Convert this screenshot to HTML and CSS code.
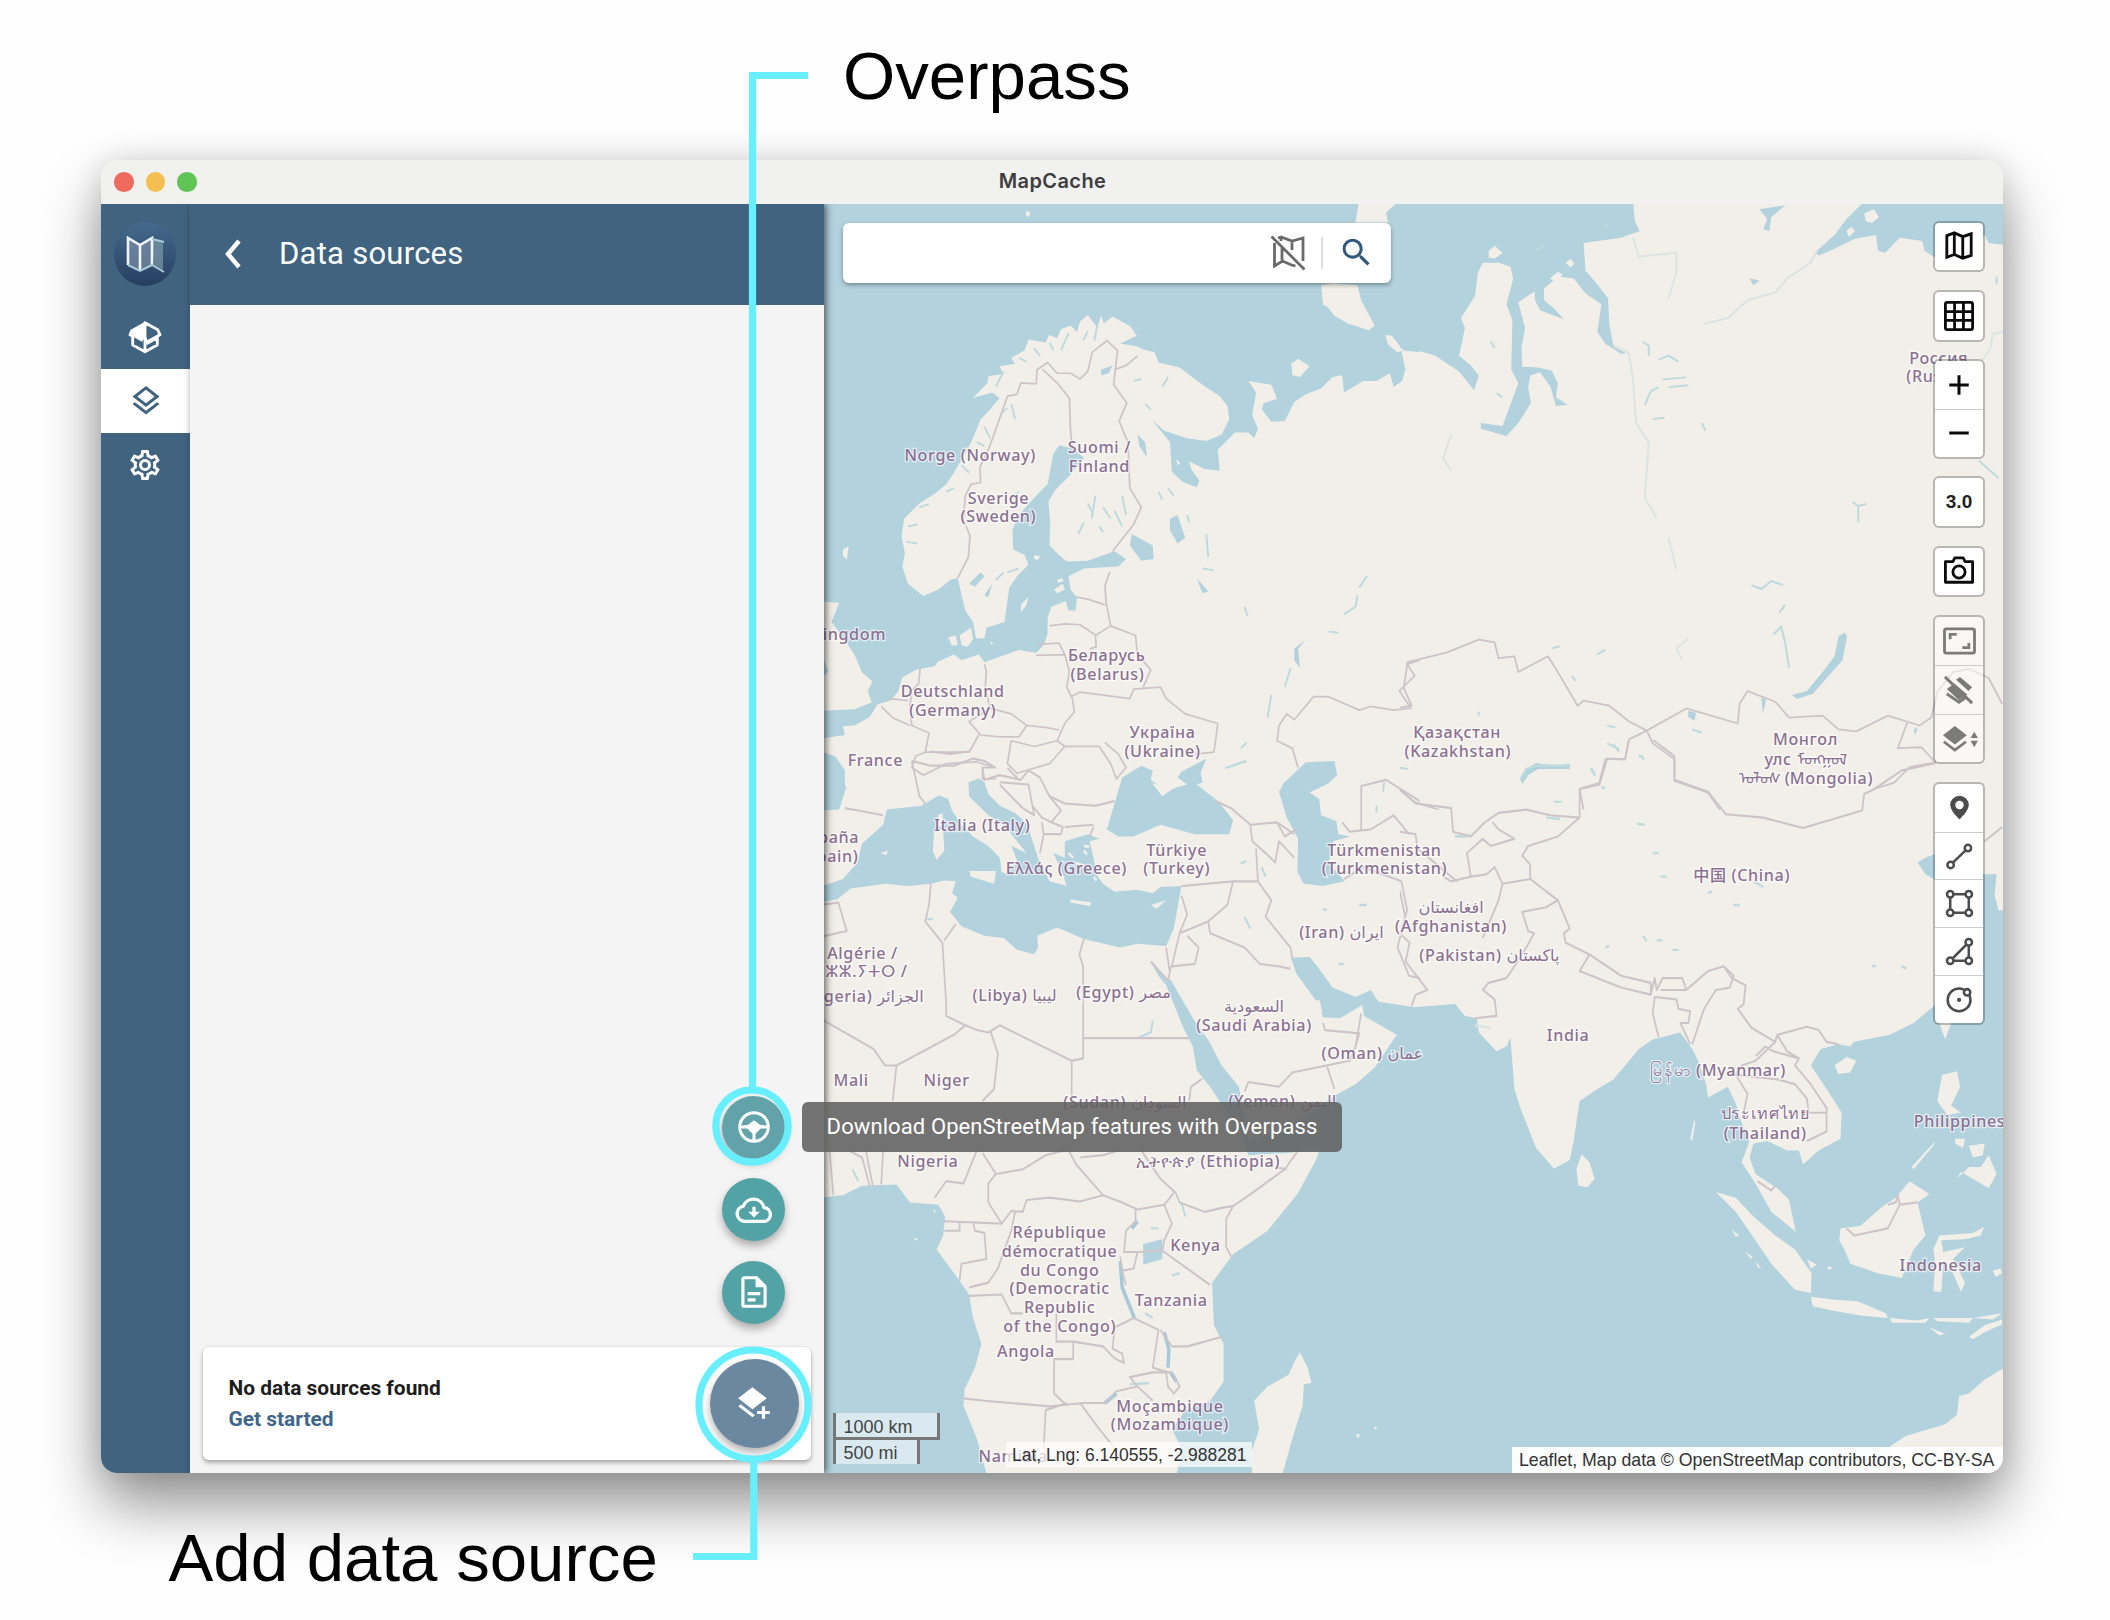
FILE: index.html
```html
<!DOCTYPE html>
<html lang="en">
<head>
<meta charset="utf-8">
<title>MapCache</title>
<link rel="stylesheet" href="styles.css">
</head>
<body>
<main class="figure">
  <p class="note note-top">Overpass</p>

  <section class="window">
    <header class="titlebar">
      <div class="lights"><i class="light red"></i><i class="light amber"></i><i class="light green"></i></div>
      <h1>MapCache</h1>
    </header>

    <div class="content">
      <nav class="rail">
        <a class="logo">
          <svg viewBox="0 0 62 64" width="62" height="64">
            <defs><linearGradient id="lg" x1="0" y1="0" x2="0" y2="1"><stop offset="0" stop-color="#456a8e"/><stop offset="1" stop-color="#263e60"/></linearGradient></defs>
            <ellipse cx="31" cy="32" rx="31" ry="32" fill="url(#lg)"/>
            <path d="M13 16l13 7v26l-13-6zM26 23l12-7v27l-12 6z" fill="#7f93ab" opacity=".65"/>
            <path d="M38 16l11 5v27l-9-5z" fill="#7c9aa9" opacity=".7"/>
            <path d="M14 43V16l12 7 12-7v27M26 23v26" fill="none" stroke="#f1f5f9" stroke-width="2.600"/>
            <path d="M38 17l12 3M14 43l12 6 12-6 12 7" fill="none" stroke="#a9cbd6" stroke-width="2"/>
          </svg>
        </a>
        <a class="item">
          <svg class="ic" viewBox="0 0 24 24"><path fill="none" stroke="currentColor" stroke-width="1.900" stroke-linejoin="round" d="M3.800 11v6.400l8.200 4.400 8.200-4.400V11M12 12v9.500M12 2.500l8.500 4.700L22 10.500 13 15.500 12 12zM3.500 7.200L2 10.500l2 1.100M19.500 12.800L13 16.500"/><path fill="currentColor" d="M2.800 7L12 1.900V12l-2 3.200L4 11.800z"/></svg>
        </a>
        <a class="item active">
          <svg class="ic" viewBox="0 0 24 24"><path fill="currentColor" d="M12,18.54L19.37,12.8L21,14.07L12,21.07L3,14.07L4.62,12.81L12,18.54M12,16L3,9L12,2L21,9L12,16M12,4.53L6.26,9L12,13.47L17.74,9L12,4.53Z"/></svg>
        </a>
        <a class="item">
          <svg class="ic" viewBox="0 0 24 24"><path fill="currentColor" d="M12,8A4,4 0 0,1 16,12A4,4 0 0,1 12,16A4,4 0 0,1 8,12A4,4 0 0,1 12,8M12,10A2,2 0 0,0 10,12A2,2 0 0,0 12,14A2,2 0 0,0 14,12A2,2 0 0,0 12,10M10,22C9.75,22 9.54,21.82 9.5,21.58L9.13,18.93C8.5,18.68 7.96,18.34 7.44,17.94L4.95,18.95C4.73,19.03 4.46,18.95 4.34,18.73L2.34,15.27C2.21,15.05 2.27,14.78 2.46,14.63L4.57,12.97L4.5,12L4.57,11L2.46,9.37C2.27,9.22 2.21,8.95 2.34,8.73L4.34,5.27C4.46,5.05 4.73,4.96 4.95,5.05L7.44,6.05C7.96,5.66 8.5,5.32 9.13,5.07L9.5,2.42C9.54,2.18 9.75,2 10,2H14C14.25,2 14.46,2.18 14.5,2.42L14.87,5.07C15.5,5.32 16.04,5.66 16.56,6.05L19.05,5.05C19.27,4.96 19.54,5.05 19.66,5.27L21.66,8.73C21.79,8.95 21.73,9.22 21.54,9.37L19.43,11L19.5,12L19.43,13L21.54,14.63C21.73,14.78 21.79,15.05 21.66,15.27L19.66,18.73C19.54,18.95 19.27,19.04 19.05,18.95L16.56,17.95C16.04,18.34 15.5,18.68 14.87,18.93L14.5,21.58C14.46,21.82 14.25,22 14,22H10M11.25,4L10.88,6.61C9.68,6.86 8.62,7.5 7.85,8.39L5.44,7.35L4.69,8.65L6.8,10.2C6.4,11.37 6.4,12.64 6.8,13.8L4.68,15.36L5.43,16.66L7.86,15.62C8.63,16.5 9.68,17.14 10.87,17.38L11.24,20H12.76L13.13,17.39C14.32,17.14 15.37,16.5 16.14,15.62L18.57,16.66L19.32,15.36L17.2,13.81C17.6,12.64 17.6,11.37 17.2,10.2L19.31,8.65L18.56,7.35L16.15,8.39C15.38,7.5 14.32,6.86 13.12,6.62L12.75,4H11.25Z"/></svg>
        </a>
      </nav>

      <aside class="panel">
        <div class="panel-head">
          <svg class="back" viewBox="0 0 18 30" width="18" height="30"><path d="M15 2L4 15l11 13" fill="none" stroke="#fff" stroke-width="4.400"/></svg>
          <h2>Data sources</h2>
        </div>
        <div class="panel-body">
          <div class="dial">
            <button class="fab lit"><svg width="36" height="36" viewBox="0 0 24 24"><circle cx="12" cy="12" r="9.500" fill="none" stroke="#fff" stroke-width="2"/><path fill="#fff" d="M3 11.200L8 10.500 12 7.500l4 3 5 .7v1.800h-4.500L13 16.500V21h-2v-4.500L7.500 13H3z"/></svg></button>
            <button class="fab"><svg width="40" height="40" viewBox="0 0 24 24"><path fill="none" stroke="#fff" stroke-width="2" stroke-linejoin="round" d="M6.200 18.800a4.600 4.600 0 0 1-.6-9.100A6.500 6.500 0 0 1 18 10.500a4.200 4.200 0 0 1 .5 8.300z"/><path fill="#fff" d="M11 10h2V13h2.500L12 16.500 8.500 13H11z"/></svg></button>
            <button class="fab"><svg width="38" height="38" viewBox="0 0 24 24"><path fill="#fff" d="M6,2A2,2 0 0,0 4,4V20A2,2 0 0,0 6,22H18A2,2 0 0,0 20,20V8L14,2H6M6,4H13V9H18V20H6V4M8,12V14H16V12H8M8,16V18H13V16H8Z"/></svg></button>
          </div>
          <div class="card">
            <div class="card-text">
              <p class="empty">No data sources found</p>
              <a class="start">Get started</a>
            </div>
            <button class="fab add"><svg width="38" height="38" viewBox="0 0 24 24"><path fill="#fff" d="M17,14H19V17H22V19H19V22H17V19H14V17H17V14M11,16L2,9L11,2L20,9L11,16M3.600,12.800L12.600,19.800L11,21L2,14.100Z"/></svg></button>
          </div>
        </div>
      </aside>

      <div class="map">
        <svg class="tiles" viewBox="824 204.500 1179.500 1268" preserveAspectRatio="none">
          <!-- north-west: Scandinavia and Europe -->
          <svg x="820" y="190" width="600" height="600" viewBox="0 0 1568 1568">
            <path class="sea" d="M0 30H1570V425L1520 420 1530 470 1522 500 1500 515 1490 480 1455 500 1420 500 1370 530 1365 485 1340 490 1310 520 1270 535 1240 555 1215 605 1180 607 1155 575 1160 558 1195 547 1180 510 1120 500 1140 530 1130 590 1145 625 1135 650 1120 635 1085 635 1040 680 1045 735 1005 730 965 710 970 730 992 760 985 778 950 765 920 738 915 660 870 605 862 597 900 630 960 650 1010 657 1050 640 1070 600 1065 565 1045 540 1000 510 940 465 885 452 875 425 845 418 830 410 785 402 828 382 812 358 765 332 742 350 735 330 725 360 700 328 680 345 672 372 655 355 630 365 620 388 598 380 590 400 545 392 535 420 500 440 510 455 470 462 478 482 440 488 438 505 400 545 450 530 470 545 440 580 420 600 400 650 385 680 350 740 330 770 300 795 260 820 220 860 213 905 222 950 215 985 230 1030 270 1062 310 1045 340 1020 360 1015 370 1060 380 1100 400 1130 408 1172 430 1172 435 1145 482 1130 495 1040 515 1010 545 980 535 955 505 940 503 890 520 850 565 800 595 770 610 690 625 668 655 675 690 700 655 745 615 785 597 815 602 870 600 930 625 955 645 972 700 970 770 945 800 965 780 985 690 990 650 1010 655 1045 672 1065 668 1100 650 1100 642 1075 605 1090 595 1120 595 1160 585 1190 565 1210 520 1203 430 1235 415 1215 370 1230 350 1215 305 1235 290 1180 288 1130 330 1085 345 1095 350 1140 335 1150 330 1190 322 1215 300 1245 250 1255 215 1275 205 1310 185 1335 150 1345 130 1378 90 1400 60 1402 65 1425 30 1430 0 1435V1362L90 1358 135 1340 125 1310 137 1285 110 1262 90 1215 60 1170 30 1130 50 1080 0 1075Z"/>
            <path class="sea" d="M0 1460L25 1490 50 1510 70 1568H0ZM815 900L870 930 872 965 840 970 810 930ZM915 860L935 850 955 910 935 925 915 890ZM390 1030L420 1000 430 1010 405 1038ZM430 1060L450 1030 440 1065ZM985 1015L1015 1050 1000 1055ZM0 1200L22 1260 0 1280ZM1240 1200L1270 1175 1250 1200 1255 1250 1240 1230ZM830 640l20 20 5 40-20-30zM735 470l30-10-10 20-20 5z"/>
            <path class="lake" d="M700 370l-12 25M725 355l-8 40M650 375l-20 45M600 400l10 20M560 415l15 20M520 440l20 10M480 475l-20 40M500 560l10 40M470 590l20-20M430 620l15 30M410 660l20 10M370 720l20 20M330 790l20-10M260 830l25-8M230 880l25-5M225 920l30 5M700 820l15 30M720 800l-10 60M740 830l20 30M770 840l20 40M690 870l-15 30M730 880l10 15M790 800l10 50M850 560l15 15M820 500l20-5M910 490l-15 25M520 790l-20 20M885 790l10 20M910 780l15 20M960 850l5 20M1010 900l5 60M1000 990l30 5M460 1020l20-20M490 1000l30-10M1110 1090l8 25M1370 1110l30-20 5-30M1410 1040l20-30M1330 1155l25 3M1180 1320l-10 60M1230 1250l-15 50M1100 1460l15-15"/>
            <path class="land" d="M1408 38H1505L1480 60 1485 86H1400ZM1310 250L1340 245 1405 250 1415 290 1450 355 1435 368 1380 350 1345 330 1330 310 1315 300ZM1478 380L1495 382 1525 420 1510 425 1485 405ZM1232 455L1250 442 1280 462 1255 490 1235 485ZM365 1165L395 1145 400 1175 385 1195 370 1190ZM335 1170L355 1165 360 1190 345 1192ZM525 1085L545 1065 540 1085 525 1105ZM612 1045L635 1030 640 1045 620 1055ZM620 1020l12-5 5 8-14 5zM560 955l15 3-5 10-10-3zM60 940l15-8-5 35-10-10zM540 55l10 5-4 12-8-5zM445 1180l8 4-5 6zM930 705l12 8-6 8z"/>
            <path class="border" d="M360 1015L388 960 392 905 375 860 380 800 395 770 420 765 418 725 440 680 455 640 490 540 515 535 525 505 565 508 568 470 595 452 620 480 655 480 680 495 700 475 712 425 750 395 778 420 772 470 768 510 802 558 782 605 805 660 810 780 840 830 820 875 765 945M582 470L620 505 652 545 655 630 660 680M772 470L800 460 830 435M758 998L745 1035 748 1080 760 1140 720 1165 722 1195 705 1200M670 1065L700 1070 745 1085M600 1140L640 1135 680 1137 722 1165M570 1188L625 1185 640 1215 565 1217M760 1140L825 1165 830 1215 865 1255 845 1300M640 1215L652 1260 645 1300 660 1330 665 1365 640 1395 620 1440 640 1455M655 1325L680 1313 810 1330 820 1305 890 1300 905 1330 955 1370 1040 1395 1030 1470 980 1475M430 1240L435 1260 432 1300 445 1355 500 1370 540 1400 590 1405 625 1412M445 1355L390 1390 420 1425 470 1430 520 1430 540 1400M262 1250L258 1290 240 1310 235 1350 240 1400 285 1420 275 1470 250 1480 240 1510 270 1530 330 1500 410 1495 455 1510M275 1470H390L415 1425M160 1350L190 1380 235 1400M180 1330L230 1335M500 1440L490 1500 515 1525 600 1500 640 1455 730 1455 760 1500 775 1540 800 1510 780 1475 745 1445M455 1510L425 1510 425 1540 460 1540M500 1440L560 1455 620 1440M1250 1510L1235 1460 1195 1440 1200 1400 1220 1370 1240 1385 1290 1325 1330 1325 1410 1360 1440 1350 1500 1360 1545 1355 1515 1310 1555 1270 1535 1240 1568 1230"/>
          </svg>
          <!-- north-east: Siberia and Central Asia -->
          <svg x="1400" y="190" width="620" height="620" viewBox="0 0 1568 1568">
            <path class="sea" d="M0 30H590L595 80 607 105 560 122 465 135 470 205 500 240 527 275 530 340 540 392 580 412 560 415 520 390 500 360 510 290 470 262 440 225 400 220 365 250 365 280 390 300 415 328 355 305 342 280 340 215 325 175 347 215 345 255 300 285 317 350 308 400 310 448 350 450 385 458 400 490 395 525 425 545 395 547 382 500 355 462 330 470 325 500 332 540 300 590 270 623 205 605 205 590 260 598 300 490 282 455 285 330 270 290 287 225 280 195 250 185 210 185 198 210 190 270 155 325 165 350 150 420 180 445 200 470 188 507 150 460 90 420 40 405 0 400ZM0 415L15 455 0 475ZM1175 30H1530V140L1490 135 1480 115 1450 160 1350 170 1328 155 1322 130 1265 122 1228 160 1210 155 1205 115 1150 125 1100 150 1060 167 1050 160 1100 115 1130 75ZM1125 1120L1132 1130 1120 1190 1080 1235 1045 1275 1005 1288 992 1278 1030 1268 1070 1220 1100 1180 1110 1130ZM305 1490L320 1465 345 1450 400 1458 430 1452 430 1465 350 1465 325 1480 310 1503ZM910 50L975 40 940 70 935 105 920 100 930 75ZM730 1318l20 5-5 20-15-10zM915 1285l12 5-8 35zM885 225l25 5-15 12zM480 1465l15 10v10zM1300 1365l10-5-5 20z"/>
            <path class="land" d="M225 155L240 142 260 160 240 175 225 172ZM380 225L400 208 412 215 395 235ZM420 185l12-10 10 12-10 10zM1175 60L1200 50 1212 70 1195 85 1180 80ZM1130 105l12-10 10 10-15 15z"/>
            <path class="river" d="M1055 155L1040 185 980 225 950 260 880 280 830 325 770 340M540 395L580 415 590 480 598 590 630 640 620 780 650 830M680 880L700 960M590 120L605 170 700 160 700 210 680 275M1526 360L1500 365 1495 400 1475 430M130 620L110 680 130 710M730 1135L700 1160 715 1190"/>
            <path class="lake" d="M615 385l15 10v25M620 545l15-35 20-10M655 430l25-10 25 15M665 480l60-5M680 500l50-5M640 580l30-3M765 590l8 20M890 1000l25 10 25-20 30 10M960 1070l15-20M945 1125l20-20 10 40 10 65M1465 685l50 45M1145 790l15 10 20-5M1160 800v40M525 1355l20 5M525 1400l30 15M385 1160l20-5M500 1175l20-12M200 1320v10M1510 220v20M230 385l10 15M245 515l15 10M390 1548h20M0 1462l20 3M435 1230l10 12M740 1365l25 8M610 1430l8 12M515 90l12 2M345 155l20-15"/>
            <path class="border" d="M0 1310L30 1305 10 1260 20 1195 120 1170 200 1138 240 1145 250 1185 290 1180 300 1220 375 1180 400 1220 450 1305 465 1292 530 1305 580 1345 625 1368 580 1390 570 1440 520 1440 505 1500 455 1515 465 1568M625 1368L725 1312 855 1350 860 1300 880 1268 950 1295 985 1335 1070 1330 1110 1365 1155 1370 1235 1330 1315 1355 1345 1335 1360 1270 1400 1220 1440 1212 1490 1235 1524 1300M625 1368L640 1400 695 1440 695 1495 780 1525 810 1568M0 1518L40 1550 100 1568M1285 1345L1260 1412 1320 1410 1355 1448 1290 1460 1250 1500 1200 1515"/>
          </svg>
          <!-- south-west: Mediterranean, Arabia and Africa -->
          <svg x="820" y="740" width="600" height="740" viewBox="0 0 1568 1568" preserveAspectRatio="none">
            <path class="sea" d="M0 25L40 35 65 65 65 110 50 148 0 150ZM0 970L60 965 110 945 200 942 235 980 310 985 327 1010 322 1050 305 1080 355 1135 390 1175 400 1225 422 1280 405 1330 378 1375 375 1410 410 1480 440 1568H0ZM0 345L45 338 80 315 170 305 230 310 290 305 325 298 355 300 345 325 360 335 340 365 370 395 430 415 480 420 515 445 560 455 570 440 568 415 620 398 690 422 785 440 830 432 905 437 925 400 945 310 890 312 870 325 830 318 770 322 740 305 722 285 715 250 705 215 730 210 700 200 640 215 640 250 610 240 630 275 645 310 600 300 570 250 550 200 545 180 510 155 470 140 440 115 430 90 415 82 388 90 390 120 440 160 480 180 510 210 540 240 500 225 515 255 490 285 475 280 470 250 440 225 400 205 370 180 345 150 335 125 310 118 265 140 175 148 165 180 110 220 98 260 60 295 0 312ZM750 190L770 135 790 80 840 55 870 65 865 85 905 110 935 100 960 95 935 80 945 68 1010 40 995 70 1000 90 985 95 1040 130 1080 170 1070 200 980 200 890 180 820 205 780 205ZM1200 110L1212 92 1270 48 1345 45 1352 75 1330 92 1280 112 1305 125 1310 160 1350 172 1355 200 1385 205 1342 215 1330 260 1345 275 1372 300 1315 310 1265 305 1248 280 1250 210 1220 165ZM862 468L905 505 918 510 975 590 1018 640 1050 690 1095 735 1110 800 1120 850 1190 835 1280 790 1350 752 1400 730 1450 695 1508 625 1422 585 1418 562 1360 590 1315 588 1305 562 1245 495 1232 462 1280 460 1300 480 1340 525 1400 545 1440 530 1460 555 1568 568V1568H930L945 1500 920 1460 955 1420 1020 1400 1055 1360 1055 1280 1030 1240 1025 1150 1080 1090 1170 1040 1250 960 1300 885 1305 865 1230 875 1120 880 1095 820 1060 785 1020 735 985 700 975 650 950 610 905 520 885 500ZM845 1068L895 1058 895 1100 845 1112Z"/>
            <path class="land" d="M298 195L322 190 325 235 305 255 295 235ZM308 160l12-5 3 25-12 5zM390 278L460 278 455 305 395 290ZM655 338L710 345 705 352 655 345ZM865 350L905 340 880 358ZM158 240l20-5-5 10zM868 92L920 105 895 120ZM1290 555l15-5 8 25-10 8zM1255 1298L1275 1330 1285 1362 1265 1365 1262 1410 1235 1480 1205 1568H1130L1128 1510 1148 1460 1135 1400 1170 1370 1225 1345 1245 1310ZM1400 1470l12 2-5 8zM1447 1455l10 2-5 6zM245 1055l10 2-4 5zM295 995l8 2-3 6z"/>
            <path class="isles" d="M650 240l12 10M670 260l20 8M690 235l8 8M715 290l8 8M690 225l14 2"/>
            <path class="lake" d="M865 1035h20M280 380h15M1100 262l15-5M1155 270l10 20M1110 375l15 25M835 630l30-10 5-25M1060 60l55-15M1475 90l-3 20M1455 140v15M1355 475h15M1315 360h10M1410 350h20M85 910l15 25M850 1215l20 10M945 980l10 30M810 1365l50-2M920 1135l20-5"/>
            <path class="lake big" d="M785 1105L790 1160 822 1225M900 1255L912 1290 910 1330M830 1020L815 1035M775 1385L745 1405M917 1340l15 20"/>
            <path class="border" d="M65 145L100 150 165 160M240 45L290 55 350 55 400 40 430 45 460 60M240 45L260 120 275 135M290 25L340 30 390 25M425 60L430 85 470 75 525 85 545 65M470 90L545 95 560 160 530 145 470 95M545 65L575 80 600 120 630 150 605 175 580 165 555 140M605 175L635 185 630 200 585 200 580 175M600 120L640 135 720 140 770 130M640 185L715 180M520 85L490 60M585 200L575 240M715 185L705 205M1035 130L1075 145 1125 180 1195 175 1240 200M1125 180L1130 215 1165 240 1190 260 1200 215 1240 250M1195 175L1215 205 1245 190M1140 230L1145 300 1080 300 1010 305 945 310M1145 300L1180 340 1165 375 1230 440 1235 465M1080 300L1065 350 1015 385 940 410 960 370 945 330M1015 385L1020 410 1110 440 1150 475 1200 480 1230 485M940 410L920 480 980 475 990 440 960 415M290 305L285 350 275 385 320 430 330 560 330 585 380 605 350 625 200 690 170 690 140 655 0 590M355 390L325 425M690 422L678 455 688 480V675L658 680 470 605 440 620 410 615 380 605M688 632H965M658 680V765M200 690L190 765M445 615L465 665 455 740 425 765M915 495L905 440M865 470L910 510 918 480M0 350L48 345 70 405 0 418M1415 195V98L1480 85 1568 130M1365 175L1385 195 1440 190 1500 160 1540 200M1370 295L1420 270 1520 300 1535 360 1510 440 1540 500 1568 505M1315 600L1320 615 1410 622 1400 650 1415 580M1400 650L1385 680 1235 705 1200 735 1120 725 1110 745M1325 690L1345 740M970 735L1000 718M970 735L965 765M25 870L35 965M75 870L110 885 130 945M120 870L138 945M165 870L160 942M410 870L375 940 330 935 300 970M425 875L460 920 440 940 440 980 475 1025 325 1020M460 920L530 910 590 880 640 870M475 1025L500 998 530 1000 540 975 600 970 680 978 740 965 790 980 830 995 900 985 925 960M650 870L670 900 740 965M680 885L740 880 780 870M840 870L890 930 930 960 940 980 1005 1000 1060 990 1080 988 1130 960 1215 910 1250 870M1190 905L1220 910M1080 988L1062 1015V1075L1075 1095M900 985L920 1025 900 1060 895 1082 830 1085 795 1085 800 1040 825 1020 825 995M895 1082L1020 1155M830 1085L820 1120 790 1125 785 1095M790 1125L800 1155M325 1040H365V1020M400 1020L405 1040 430 1045 435 1100 370 1110 365 1145M390 1160L440 1150 465 1120 500 1040 510 1000M390 1178L475 1175 500 1215 530 1215M618 1215V1275L662 1275V1312H612V1385L645 1410M662 1275L740 1285 770 1310 795 1320 790 1300 765 1290 770 1245 820 1225 885 1250 870 1330 910 1340M890 1250L920 1285 960 1285 1050 1265M375 1395L430 1400 600 1412 690 1405 745 1405 775 1380 830 1370 810 1350 870 1340 920 1340M645 1405L590 1420 585 1500M680 1405L730 1460 770 1500M830 1370L870 1400M925 1345L940 1370 925 1385 910 1370 905 1340"/>
          </svg>
          <!-- south-east: India, China and the archipelago -->
          <svg x="1400" y="740" width="620" height="740" viewBox="0 0 1568 1568" preserveAspectRatio="none">
            <path class="sea" d="M0 568L60 565 140 560 165 585 195 590 200 620 245 660 270 650 280 630 290 740 305 780 345 865 390 908 430 890 440 850 455 765 500 740 540 720 605 655 640 635 710 620 740 655 755 680 775 730 780 758 830 735 850 770 860 800 885 850 865 895 900 940 940 1000 1002 1042 985 975 955 950 900 920 885 885 895 855 930 850 980 870 1010 870 1020 900 1060 870 1115 845 1118 790 1080 740 1040 690 1065 655 1110 645 1140 650 1150 640 1240 625 1300 600 1350 565 1420 490 1440 440 1430 340 1390 290 1420 260 1440 290 1480 285 1510 285 1505 330 1515 362 1530 360V1330L1480 1355 1440 1385 1415 1390 1410 1430 1380 1450 1280 1475 1240 1497V1568H0ZM1310 260L1330 250 1360 240 1360 300 1330 285Z"/>
            <path class="land" d="M460 878L480 895 493 930 475 948 452 945 447 910ZM1100 690L1130 672 1155 680 1140 705 1110 708ZM1365 600L1395 600 1380 635ZM1372 710L1410 702 1418 735 1395 775 1420 790 1385 795 1360 765ZM800 958L850 970 895 1010 950 1050 1000 1080 1042 1130 1040 1172 1000 1165 940 1110 900 1060 850 1000ZM1040 1180L1090 1185 1160 1190 1230 1215 1235 1225 1170 1220 1100 1210 1045 1200ZM1115 1035L1165 1030 1220 990 1255 970 1290 935 1340 962 1310 980 1330 1050 1300 1080 1270 1140 1210 1130 1140 1110 1125 1080 1112 1060ZM1365 1050L1450 1045 1478 1032 1470 1050 1430 1058 1370 1060 1375 1085 1430 1075 1400 1100 1430 1150 1420 1170 1400 1130 1375 1110 1370 1170 1350 1168 1355 1110 1350 1080ZM1410 930L1440 905 1470 905 1490 880 1510 920 1490 950 1460 935 1420 915ZM1405 845L1430 845 1425 865 1405 855ZM1440 860L1480 855 1475 880 1450 885ZM1030 1100l25 12-15 8zM1080 1115l15 3-8 6zM1240 1225L1310 1230 1340 1225 1330 1235 1245 1235ZM1350 1225L1450 1225 1440 1235 1360 1232ZM1340 1245L1380 1258 1365 1262ZM1440 1265L1480 1240 1524 1228 1524 1238 1480 1255 1450 1270ZM1450 1225L1524 1215 1500 1228ZM735 845l10-40 3 5-8 40zM840 1038l20 12-10 3zM875 1085l18 10-5 5zM900 1105l15 15-10-3zM810 1010l12 8zM1500 1125l20-5 3 10-15 8zM1295 905L1355 850 1350 860 1300 910Z"/>
            <path class="river" d="M140 205L185 200M190 605L230 610"/>
            <path class="lake" d="M305 85L320 62 345 55 430 55M370 165l35 3M600 178l20 2M485 60l8 15M510 100l10 3M540 10l15 15M895 300l25 12M615 415l10 12M650 425h15M690 445h15M520 440l10-3M1270 480l12 5M660 290h15M780 325l10-3M640 240h15M845 350h15M1195 480l10-2M140 205h30M605 35h10"/>
            <path class="border" d="M0 105L40 135 130 145 135 195 180 205 215 175 250 155 320 148 380 160 455 165 455 105 505 95 525 40 570 42 580 0M640 0L695 35 695 85 780 110 825 158 920 165 1020 187 1170 150 1175 115 1200 105 1270 65 1355 50M455 165L400 205 325 225 310 245 330 265 330 295 260 305 250 340 210 420M180 290L170 240 210 210 230 225 290 210 250 190 235 175M180 290L130 300 110 290M180 290L220 285 240 270 260 305 330 295 345 305 400 340 430 400 415 410 420 430 480 455 560 500 635 515 635 540 560 525 455 490 480 455M400 340L370 355 310 365 325 405 340 410 320 440 290 480 270 505 225 515 210 530 240 550 245 585 190 590M0 195L40 200 45 230 130 290 145 300M0 320L15 380 0 410 25 430 15 470 70 530 40 540 30 565M635 540L645 505 650 530 665 505 715 505 725 530 660 530M645 545L640 580 655 630M645 545L700 550 705 570 735 575 730 600 710 600 735 645M725 530L780 490 820 480 845 500 835 525 800 530 770 570 740 645M820 480L840 505 875 520 870 560 855 570 890 610 950 640 900 680 865 690 850 710 880 750 870 790M950 640L955 625 1030 608 1060 615 1080 640 1110 645M900 670L925 650 945 660 1010 675 1000 690 1040 730 1080 780 1080 830 1030 850M955 625L980 660 1010 675M850 710L905 715 960 720 1000 730 1030 760 1035 790 1080 790M905 935L940 955 950 945M1235 985L1255 980 1260 965 1265 985 1310 980M1130 1035L1150 1050 1235 1035 1265 985M1480 215L1524 185"/>
          </svg>
          <g class="names" transform="scale(1.3457)">
            <text x="721" y="343">Norge (Norway)</text>
            <text x="817" y="337">Suomi /</text><text x="817" y="351">Finland</text>
            <text x="742" y="374.500">Sverige</text><text x="742" y="388.500">(Sweden)</text>
            <text x="658.500" y="475.500" text-anchor="end">Kingdom</text>
            <text x="822.500" y="491.500">Беларусь</text><text x="823" y="505.500">(Belarus)</text>
            <text x="708" y="518.500">Deutschland</text><text x="708" y="532.500">(Germany)</text>
            <text x="864" y="549">Україна</text><text x="864" y="563">(Ukraine)</text>
            <text x="650.500" y="569.500">France</text>
            <text x="730" y="618">Italia (Italy)</text>
            <text x="638.500" y="627" text-anchor="end">España</text><text x="638" y="641" text-anchor="end">(Spain)</text>
            <text x="792.500" y="650">Ελλάς (Greece)</text>
            <text x="874.500" y="636">Türkiye</text><text x="874.500" y="650">(Turkey)</text>
            <text x="1029" y="636">Türkmenistan</text><text x="1029" y="650">(Turkmenistan)</text>
            <text x="1083" y="549">Қазақстан</text><text x="1083.500" y="563">(Kazakhstan)</text>
            <text x="1342" y="554">Монгол</text><text x="1342" y="568.500">улс ᠮᠣᠩᠭᠣᠯ</text><text x="1342" y="582.500">ᠤᠯᠤᠰ (Mongolia)</text>
            <text x="1441" y="270.500">Россия</text><text x="1441" y="284.500">(Russia)</text>
            <text x="1294.500" y="655">中国 (China)</text>
            <text x="641" y="712.500">Algérie /</text><text x="644" y="726.500">ⵣⵣ.ⵢⵜⵔ /</text>
            <text x="686.500" y="744.500" text-anchor="end">(Algeria) الجزائر</text>
            <text x="754" y="744">(Libya) ليبيا</text><text x="835" y="741.500">(Egypt) مصر</text>
            <text x="932" y="752">السعودية</text><text x="932" y="766">(Saudi Arabia)</text>
            <text x="997" y="697.500">(Iran) ايران</text>
            <text x="1078.500" y="679">افغانستان</text><text x="1078.500" y="692.500">(Afghanistan)</text>
            <text x="1107" y="714.500">(Pakistan) پاکستان</text>
            <text x="1020" y="787">(Oman) عمان</text>
            <text x="1165.500" y="773.500">India</text>
            <text x="632.500" y="807">Mali</text><text x="703.500" y="807.500">Niger</text>
            <text x="836" y="823.500">(Sudan) السودان</text><text x="953" y="822.500">(Yemen) اليمن</text>
            <text x="689.500" y="867.500">Nigeria</text><text x="898" y="867.500">ኢትዮጵያ (Ethiopia)</text>
            <text x="787.500" y="920">République</text><text x="787.500" y="934">démocratique</text><text x="787.500" y="948">du Congo</text><text x="787.500" y="962">(Democratic</text><text x="787.500" y="976">Republic</text><text x="787.500" y="990">of the Congo)</text>
            <text x="888.500" y="929.500">Kenya</text><text x="870.500" y="970.500">Tanzania</text><text x="762.500" y="1008.500">Angola</text>
            <text x="869.500" y="1049.500">Moçambique</text><text x="869.500" y="1063">(Mozambique)</text>
            <text x="753" y="1086.500">Namibia</text>
            <text x="1277" y="799.500">မြန်မာ (Myanmar)</text>
            <text x="1312" y="832">ประเทศไทย</text><text x="1312" y="846.500">(Thailand)</text>
            <text x="1456.500" y="837.500">Philippines</text><text x="1442.500" y="944.500">Indonesia</text>
          </g>
        </svg>

        <div class="search">
          <svg width="36" height="36" viewBox="0 0 36 36" fill="none" stroke="#6a6a6a" stroke-width="2.800"><path d="M4.500 8v23l8-5 9 4 4 1M12 12v14M8 3l3-1 11 4 11-3v23M22 6v9M11 2v4M1.500 1.500l33 33"/></svg>
          <span class="sep"></span>
          <svg width="37" height="37" viewBox="0 0 24 24"><path fill="#33597c" d="M9.5,3A6.5,6.5 0 0,1 16,9.5C16,11.11 15.41,12.59 14.44,13.73L14.71,14H15.5L20.5,19L19,20.5L14,15.5V14.71L13.73,14.44C12.59,15.41 11.11,16 9.5,16A6.5,6.5 0 0,1 3,9.5A6.5,6.5 0 0,1 9.5,3M9.5,5C7,5 5,7 5,9.5C5,12 7,14 9.5,14C12,14 14,12 14,9.5C14,7 12,5 9.5,5Z"/></svg>
        </div>

        <div class="tools">
          <div class="group"><button><svg viewBox="0 0 32 32"><path d="M3 5l8-3 9 4 9-3v23l-9 3-9-4-8 3zM11 2v23M20 6v23"/></svg></button></div>
          <div class="group"><button><svg viewBox="0 0 32 32"><rect x="1.500" y="1.500" width="29" height="29" rx="2"/><path d="M2 11.300h28M2 20.700h28M11.300 2v28M20.700 2v28"/></svg></button></div>
          <div class="group zoom"><button><svg viewBox="0 0 32 32"><path d="M3 16h26M16 3v26"/></svg></button><button><svg viewBox="0 0 32 32"><path d="M3 16h26"/></svg></button></div>
          <div class="group"><button class="level">3.0</button></div>
          <div class="group"><button><svg viewBox="0 0 32 32"><path d="M1.500 6h8l2-4h9l2 4h8v22h-29z" stroke-linejoin="round"/><circle cx="16" cy="17" r="6.500"/></svg></button></div>
          <div class="group off">
            <button><svg class="wide" viewBox="0 0 36 32"><rect x="2" y="3" width="32" height="26" rx="2"/><path d="M8 14V9h7M28 18v5h-7"/></svg></button>
            <button><svg viewBox="0 0 32 32"><path d="M3 15l8-6 14 12-9 6zM13 5l4-3 13 11-4 4z" fill="#7b7b78" stroke="none"/><path d="M3 20l13 9 7-5M1 2l29 28"/></svg></button>
            <button><svg class="wide" viewBox="0 0 38 32"><path d="M14 2l13 10-13 10L1 12z" fill="#7b7b78" stroke="none"/><path d="M2 19l12 9 12-9"/><path d="M31 15l4-7 4 7zM31 18l4 7 4-7z" fill="#7b7b78" stroke="none"/></svg></button>
          </div>
          <div class="group draw">
            <button><svg viewBox="0 0 32 32"><path fill="#4c4c4c" stroke="none" fill-rule="evenodd" d="M16 2a11 11 0 0 1 11 11c0 7-11 17-11 17S5 20 5 13A11 11 0 0 1 16 2zm0 6a5 5 0 1 0 0 10 5 5 0 0 0 0-10z"/></svg></button>
            <button><svg viewBox="0 0 32 32"><circle cx="5.500" cy="26" r="3.800"/><circle cx="26" cy="6" r="3.800"/><path d="M8.500 23l15-14.500"/></svg></button>
            <button><svg viewBox="0 0 32 32"><circle cx="5" cy="5" r="3.800"/><circle cx="27" cy="5" r="3.800"/><circle cx="5" cy="27" r="3.800"/><circle cx="27" cy="27" r="3.800"/><path d="M9 5h14M9 27h14M5 9v14M27 9v14"/></svg></button>
            <button><svg viewBox="0 0 32 32"><circle cx="27" cy="5" r="3.800"/><circle cx="5" cy="27" r="3.800"/><circle cx="27" cy="27" r="3.800"/><path d="M8 24L24 8M9 27h14M27 9v14"/></svg></button>
            <button><svg viewBox="0 0 32 32"><circle cx="15.500" cy="16.500" r="13.500"/><circle cx="25" cy="7.500" r="3.800" fill="#fff"/><circle cx="15.500" cy="16.500" r="1" fill="#4c4c4c"/></svg></button>
          </div>
        </div>

        <div class="scale"><span class="km">1000 km</span><span class="mi">500 mi</span></div>
        <div class="coords">Lat, Lng: 6.140555, -2.988281</div>
        <div class="credit">Leaflet, Map data © OpenStreetMap contributors, CC-BY-SA</div>
      </div>
    </div>
  </section>

  <p class="note note-bottom">Add data source</p>

  <div class="tooltip">Download OpenStreetMap features with Overpass</div>
  <svg class="callouts" viewBox="0 0 2110 1620" width="2110" height="1620">
    <path d="M808 75.500H752.500V1088M753.800 1461V1556.500H693"/>
    <circle cx="752" cy="1126" r="36.200"/>
    <circle cx="753.500" cy="1404.500" r="54.500"/>
  </svg>
</main>
</body>
</html>
```
FILE: styles.css
```css
* { box-sizing: border-box; }
body { margin: 0; background: #fff; font-family: Roboto, "Noto Sans", sans-serif; }
h1, h2, p { margin: 0; font-weight: 400; }
button { border: 0; padding: 0; background: none; font: inherit; }

.figure {
  position: relative;
  width: 2110px;
  height: 1620px;
  display: grid;
  grid-template-rows: 160px 1312.500px 1fr;
  overflow: hidden;
  background: #fefefe;
}
.note { font: 67.200px/76px "Liberation Sans", Arial, sans-serif; color: #000; position: relative; z-index: 2; }
.note-top { padding: 38px 0 0 843px; }
.note-bottom { padding: 47px 0 0 168.500px; }

.window {
  margin: 0 107px 0 101px;
  display: flex;
  flex-direction: column;
  border-radius: 16px;
  background: #f4f4f4;
  box-shadow: 0 32px 58px rgba(0, 0, 0, .42), 0 0 30px rgba(0, 0, 0, .12);
}
.titlebar {
  height: 44px;
  display: grid;
  grid-template-columns: 1fr auto 1fr;
  align-items: center;
  padding-left: 13px;
  background: #f1f1f0;
  border-radius: 16px 16px 0 0;
}
.titlebar h1 { font: 600 20px/24px Inter, sans-serif; color: #3d3d3d; letter-spacing: .4px; margin: -2px 0 0 -12px; }
.lights { display: flex; gap: 12.200px; }
.light { width: 19.500px; height: 19.500px; border-radius: 50%; }
.red { background: #ed6a5f; }
.amber { background: #f4bf50; }
.green { background: #61c555; }

.content { flex: 1; display: flex; min-height: 0; border-radius: 0 0 16px 16px; overflow: hidden; }
.rail { width: 89px; background: #40637f; display: flex; flex-direction: column; border-right: 1px solid #4b6c87; }
.logo { height: 100.500px; display: flex; align-items: center; justify-content: center; }
.item { height: 64px; display: flex; align-items: center; justify-content: center; color: #fff; }
.active { background: #fff; color: #40637f; width: 89px; }
.ic { width: 36px; height: 36px; }

.panel { width: 634px; display: flex; flex-direction: column; background: #f4f4f4; position: relative; z-index: 1; box-shadow: 2px 0 7px rgba(0, 0, 0, .6); }
.panel-head { height: 100.500px; background: #40637f; display: flex; align-items: center; padding-left: 34px; gap: 37px; }
.panel-head h2 { font-size: 31px; line-height: 40px; color: #fff; letter-spacing: .25px; }
.panel-body { flex: 1; display: flex; flex-direction: column; justify-content: flex-end; padding: 0 13px 13px 12.500px; gap: 23px; }
.dial { align-self: flex-end; display: flex; flex-direction: column; gap: 19.300px; margin-right: 26px; }
.fab { width: 63px; height: 63px; border-radius: 50%; background: #52a2a6; display: flex; align-items: center; justify-content: center; box-shadow: 0 5px 9px rgba(0, 0, 0, .3); }
.lit { background: #62a3a9; }
.card { height: 113px; background: #fff; border-radius: 6px; box-shadow: 0 3px 4px rgba(0, 0, 0, .28), 0 0 3px rgba(0, 0, 0, .1); display: flex; justify-content: space-between; align-items: center; padding: 0 12.500px 0 26px; }
.card-text { display: flex; flex-direction: column; }
.empty { font-size: 20.900px; font-weight: 700; line-height: 32px; color: #1d1d1d; }
.start { font-size: 20.900px; font-weight: 700; line-height: 31px; color: #40668a; }
.add { width: 89px; height: 89px; background: #6a88a0; }

.map { flex: 1; position: relative; background: #f2efe9; }
.tiles { display: block; width: 100%; height: 100%; background: #f2efe9; }
.sea { fill: #b2d2de; }
.land { fill: #f2efe9; }
.isles { fill: none; stroke: #f2efe9; stroke-width: 6; }
.lake { fill: none; stroke: #bddade; stroke-width: 5; }
.big { stroke: #a5c9dc; stroke-width: 9; }
.river { fill: none; stroke: #dbe4e2; stroke-width: 5; }
.border { fill: none; stroke: #cec3c8; stroke-width: 4.500; stroke-linejoin: round; }
.names { font: 500 12px "Noto Sans", "Noto Sans CJK SC", "DejaVu Sans", sans-serif; letter-spacing: .48px; fill: #8b7092; text-anchor: middle; paint-order: stroke; stroke: rgba(255, 255, 255, .65); stroke-width: 2px; }

.search { position: absolute; left: 19px; top: 18.500px; width: 548px; height: 60px; border-radius: 6px; background: #fff; box-shadow: 0 2px 4px rgba(0, 0, 0, .35); display: flex; justify-content: flex-end; align-items: center; padding-right: 16px; gap: 15.500px; }
.sep { width: 1.500px; height: 32px; background: #ddd; }

.tools { position: absolute; right: 18px; top: 16.500px; width: 52px; display: flex; flex-direction: column; gap: 17.400px; }
.group { border: 2px solid rgba(0, 0, 0, .24); border-radius: 6px; background: #fff; background-clip: padding-box; }
.group button { width: 100%; height: 47.900px; display: flex; align-items: center; justify-content: center; }
.group button + button { border-top: 1.500px solid #ccc; }
.group svg { width: 30px; height: 30px; fill: none; stroke: #0b0b0b; stroke-width: 3; overflow: visible; }
.group.zoom svg { width: 24px; height: 24px; stroke-width: 4; }
.group .level { font: 700 19px "Liberation Sans", Arial, sans-serif; color: #222; }
.off { background: rgba(255, 255, 255, .55); background-clip: padding-box; }
.group.off button { height: 48.500px; }
.group.off svg { stroke: #7b7b78; }
.group.off .wide { width: 35px; }
.group.draw svg { width: 27px; height: 27px; stroke: #4c4c4c; }

.scale { position: absolute; left: 8.500px; bottom: 8.500px; display: flex; flex-direction: column; align-items: flex-start; font: 18px/28px "Liberation Sans", Arial, sans-serif; color: #444; }
.scale span { border: 3px solid #777; border-top: 0; padding-left: 8px; background: rgba(255, 255, 255, .5); }
.km { width: 107px; height: 27px; }
.scale .mi { width: 87px; height: 24px; border-bottom: 0; line-height: 27px; }
.coords { position: absolute; left: 182px; bottom: 6px; width: 246px; height: 25px; padding-left: 6px; background: rgba(255, 255, 255, .7); font: 17.500px/26px "Liberation Sans", Arial, sans-serif; color: #333; white-space: nowrap; }
.credit { position: absolute; right: 0; bottom: 0; width: 491px; height: 26px; padding-left: 7px; background: rgba(255, 255, 255, .93); font: 17.730px/26px "Liberation Sans", Arial, sans-serif; color: #333; white-space: nowrap; }

.tooltip { position: absolute; z-index: 3; left: 802px; top: 1101.500px; width: 540px; height: 50.500px; border-radius: 6px; background: rgba(97, 97, 97, .88); color: #fff; font-size: 22px; line-height: 50px; text-align: center; white-space: nowrap; letter-spacing: .1px; }
.callouts { position: absolute; left: 0; top: 0; z-index: 4; fill: none; stroke: #67efff; stroke-width: 7.200; }
```
